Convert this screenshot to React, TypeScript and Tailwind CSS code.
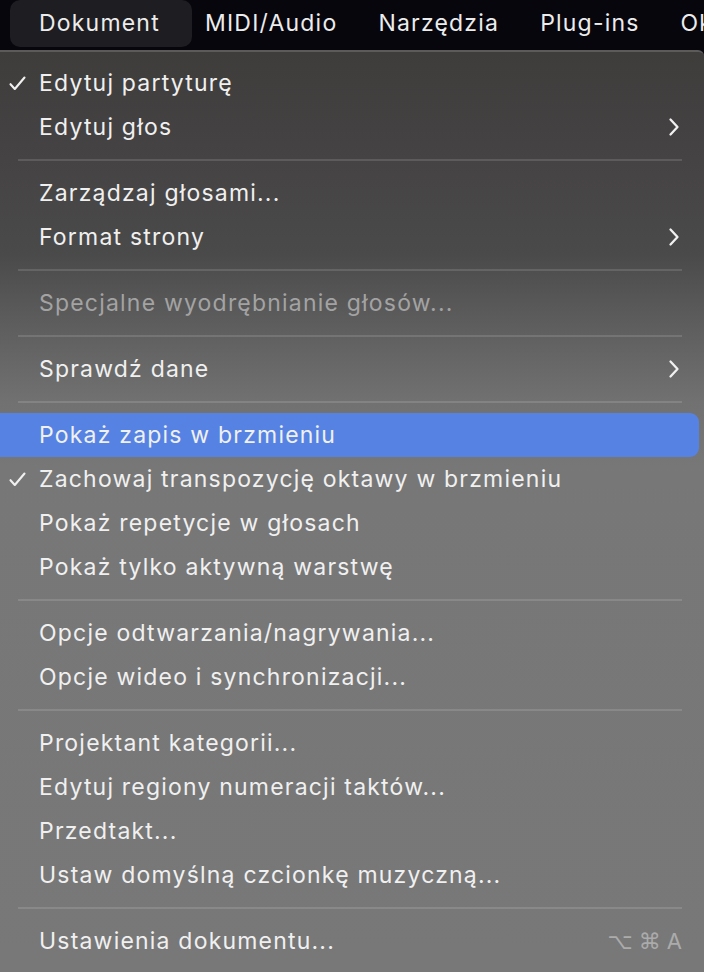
import React from "react";

type Item =
  | { type: "sep" }
  | {
      type?: "item";
      label: string;
      checked?: boolean;
      submenu?: boolean;
      disabled?: boolean;
      highlight?: boolean;
      shortcut?: boolean;
    };

const items: Item[] = [
  { label: "Edytuj partyturę", checked: true },
  { label: "Edytuj głos", submenu: true },
  { type: "sep" },
  { label: "Zarządzaj głosami..." },
  { label: "Format strony", submenu: true },
  { type: "sep" },
  { label: "Specjalne wyodrębnianie głosów...", disabled: true },
  { type: "sep" },
  { label: "Sprawdź dane", submenu: true },
  { type: "sep" },
  { label: "Pokaż zapis w brzmieniu", highlight: true },
  { label: "Zachowaj transpozycję oktawy w brzmieniu", checked: true },
  { label: "Pokaż repetycje w głosach" },
  { label: "Pokaż tylko aktywną warstwę" },
  { type: "sep" },
  { label: "Opcje odtwarzania/nagrywania..." },
  { label: "Opcje wideo i synchronizacji..." },
  { type: "sep" },
  { label: "Projektant kategorii..." },
  { label: "Edytuj regiony numeracji taktów..." },
  { label: "Przedtakt..." },
  { label: "Ustaw domyślną czcionkę muzyczną..." },
  { type: "sep" },
  { label: "Ustawienia dokumentu...", shortcut: true },
];

function Check() {
  return (
    <svg width="17" height="15" viewBox="0 0 17 15" fill="none">
      <path
        d="M1.5 8.2 L5.8 13 L15.5 1.5"
        stroke="#f0f0f0"
        strokeWidth="2.1"
        strokeLinecap="round"
        strokeLinejoin="round"
      />
    </svg>
  );
}

function Chevron() {
  return (
    <svg width="12" height="20" viewBox="0 0 12 20" fill="none">
      <path
        d="M2.5 2.5 L9.5 10 L2.5 17.5"
        stroke="#f0f0f0"
        strokeWidth="2.3"
        strokeLinecap="round"
        strokeLinejoin="round"
      />
    </svg>
  );
}

export default function App() {
  return (
    <div
      className="w-[704px] h-[972px] overflow-hidden bg-[#07060c] flex flex-col"
      style={{ fontFamily: "Inter, 'Noto Sans', sans-serif" }}
    >
      {/* menu bar */}
      <div className="h-[50px] shrink-0 flex items-start text-[23px] tracking-[1.2px] text-[#ececec] whitespace-nowrap overflow-hidden">
        <div className="ml-[10px] h-[47px] w-[182px] shrink-0 rounded-[10px] bg-[#1e1d22] flex items-center pl-[29px]">
          Dokument
        </div>
        <div className="h-[47px] flex items-center gap-[41px] ml-[13px] shrink-0">
          <span>MIDI/Audio</span>
          <span>Narzędzia</span>
          <span>Plug-ins</span>
          <span>Okno</span>
        </div>
      </div>

      {/* dropdown */}
      <div className="flex-1 border-t-2 border-[#5c5b5a] rounded-tr-[6px] bg-[linear-gradient(to_bottom,#3f3d3c_0%,#444242_10%,#4b4a4a_22%,#575757_27%,#636363_32%,#717171_38%,#777777_45%,#787878_100%)] pt-[9px] pr-[5px] text-[23px] tracking-[1.2px] text-[#f0f0f0]">
        {items.map((it, i) =>
          it.type === "sep" ? (
            <div key={i} className="h-[22px] flex items-center pl-[18px] pr-[17px]">
              <div className="h-[2px] w-full bg-[rgba(255,255,255,0.13)]" />
            </div>
          ) : (
            <div
              key={i}
              className={
                "h-[44px] flex items-center relative " +
                (it.highlight ? "bg-[#5683e3] rounded-r-[9px] " : "")
              }
            >
              <div className="w-[39px] shrink-0 flex items-center pl-[9px]">
                {it.checked ? <Check /> : null}
              </div>
              <div
                className={
                  "flex-1 whitespace-nowrap " +
                  (it.disabled ? "text-[#a3a3a3]" : "text-[#f0f0f0]")
                }
              >
                {it.label}
              </div>
              {it.submenu ? (
                <div className="mr-[19px] flex items-center">
                  <Chevron />
                </div>
              ) : null}
              {it.shortcut ? (
                <div
                  className="mr-[17px] text-[#ababab] text-[22px] tracking-normal flex items-center gap-[6px]"
                  style={{ fontFamily: "'DejaVu Sans', Inter, sans-serif" }}
                >
                  <span>⌥</span>
                  <span>⌘</span>
                  <span style={{ fontFamily: "Inter, sans-serif" }}>A</span>
                </div>
              ) : null}
            </div>
          )
        )}
      </div>
    </div>
  );
}
